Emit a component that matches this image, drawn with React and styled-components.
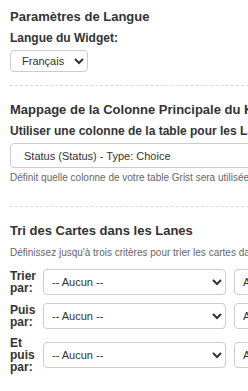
import React from 'react';
import styled, { createGlobalStyle } from 'styled-components';

const GlobalStyle = createGlobalStyle`
    html, body {
        margin: 0;
        padding: 0;
        overflow: hidden;
        background: #ffffff;
    }

    body {
        font-family: "Liberation Sans", Arial, sans-serif;
        color: #333333;
    }
`;

const StyledPanel = styled.div`
    width: 344px;
    padding: 9px 10px;
    box-sizing: border-box;
`;

const Section = styled.section`
    padding-bottom: ${(p) => p.$pb || 13}px;
    margin-bottom: 16px;
    border-bottom: ${(p) => (p.$last ? 'none' : '1px dashed #dcdcdc')};
`;

const Title = styled.h3`
    margin: 0 0 ${(p) => p.$mb || 6}px 0;
    font-size: 13px;
    line-height: 16px;
    font-weight: bold;
    color: #333333;
    white-space: nowrap;
`;

const FieldLabel = styled.label`
    display: block;
    margin-bottom: 5px;
    font-size: 12px;
    line-height: 14px;
    font-weight: bold;
    color: #333333;
    white-space: nowrap;
`;

const Select = styled.select`
    display: block;
    width: ${(p) => p.$width || '100%'};
    height: ${(p) => p.$height || 26}px;
    padding: 0 ${(p) => p.$padR ?? 2}px 0 ${(p) => p.$padL ?? 4}px;
    box-sizing: border-box;
    border: 1px solid #cccccc;
    border-radius: 4px;
    background-color: #ffffff;
    font-family: "Liberation Sans", Arial, sans-serif;
    font-size: 11px;
    color: #333333;
`;

const Help = styled.p`
    margin: ${(p) => p.$mt ?? 4}px 0 0 0;
    font-size: 10px;
    line-height: 12px;
    color: #666666;
    white-space: nowrap;
`;

const SortRows = styled.div`
    margin-top: 10px;
    display: flex;
    flex-direction: column;
    gap: 8px;
`;

const SortRow = styled.div`
    display: flex;
    align-items: center;
    gap: 6px;
`;

const SortLabel = styled.label`
    flex: 0 0 27px;
    font-size: 12px;
    line-height: 12px;
    font-weight: bold;
    color: #333333;
`;

const SortField = styled(Select)`
    flex: 1 1 auto;
    width: auto;
    min-width: 0;
`;

const SortDirection = styled(Select)`
    flex: 0 0 100px;
    margin-left: 2px;
`;

const sortRows = ['Trier par:', 'Puis par:', 'Et puis par:'];

export default function App() {
    return (
        <>
            <GlobalStyle />
            <StyledPanel>
                <Section>
                    <Title>Paramètres de Langue</Title>
                    <FieldLabel>Langue du Widget:</FieldLabel>
                    <Select $width='78px' $height={22} $padL={7} $padR={0} defaultValue='fr'>
                        <option value='fr'>Français</option>
                        <option value='en'>English</option>
                    </Select>
                </Section>

                <Section $pb={22}>
                    <Title>Mappage de la Colonne Principale du Kanban</Title>
                    <FieldLabel>Utiliser une colonne de la table pour les Lanes:</FieldLabel>
                    <Select $height={25} $padL={9} defaultValue='status'>
                        <option value='status'>Status (Status) - Type: Choice</option>
                    </Select>
                    <Help>Définit quelle colonne de votre table Grist sera utilisée pour créer les lanes.</Help>
                </Section>

                <Section $last>
                    <Title $mb={8}>Tri des Cartes dans les Lanes</Title>
                    <Help $mt={0}>Définissez jusqu'à trois critères pour trier les cartes dans chaque lane.</Help>
                    <SortRows>
                        {sortRows.map((label) => (
                            <SortRow key={label}>
                                <SortLabel>{label}</SortLabel>
                                <SortField defaultValue=''>
                                    <option value=''>-- Aucun --</option>
                                </SortField>
                                <SortDirection defaultValue='asc'>
                                    <option value='asc'>Ascendant</option>
                                    <option value='desc'>Descendant</option>
                                </SortDirection>
                            </SortRow>
                        ))}
                    </SortRows>
                </Section>
            </StyledPanel>
        </>
    );
};
